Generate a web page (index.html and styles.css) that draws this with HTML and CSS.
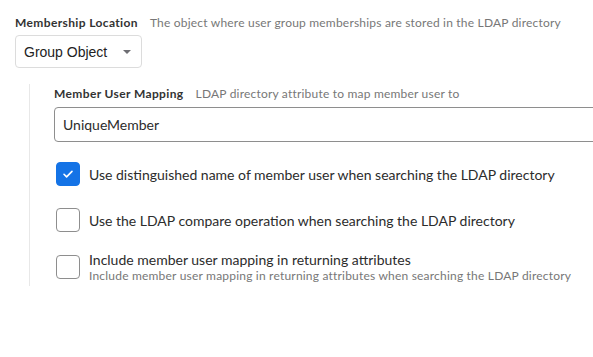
FILE: index.html
```html
<!DOCTYPE html>
<html lang="en">
<head>
  <meta charset="UTF-8">
  <meta name="viewport" content="width=device-width, initial-scale=1.0">
  <title>LDAP Group Settings</title>
  <link rel="stylesheet" href="styles.css">
</head>
<body>
  <div class="page">
    <!-- Membership location -->
    <div class="field-head">
      <span class="field-label">Membership Location</span>
      <span class="field-desc">The object where user group memberships are stored in the LDAP directory</span>
    </div>
    <div class="select">
      <span>Group Object</span>
      <span class="caret"></span>
    </div>

    <!-- Nested options -->
    <div class="nested">
      <div class="field-head">
        <span class="field-label">Member User Mapping</span>
        <span class="field-desc">LDAP directory attribute to map member user to</span>
      </div>
      <div class="text-input">UniqueMember</div>

      <div class="check-row">
        <span class="checkbox checked">
          <svg width="14" height="14" viewBox="0 0 14 14"><path d="M3 7.3l2.6 2.6L11 4.4" fill="none" stroke="#fff" stroke-width="1.6" stroke-linecap="round" stroke-linejoin="round"/></svg>
        </span>
        <div class="check-text">
          <div class="check-label">Use distinguished name of member user when searching the LDAP directory</div>
        </div>
      </div>

      <div class="check-row">
        <span class="checkbox"></span>
        <div class="check-text">
          <div class="check-label">Use the LDAP compare operation when searching the LDAP directory</div>
        </div>
      </div>

      <div class="check-row last">
        <span class="checkbox"></span>
        <div class="check-text">
          <div class="check-label">Include member user mapping in returning attributes</div>
          <div class="check-help">Include member user mapping in returning attributes when searching the LDAP directory</div>
        </div>
      </div>
    </div>
  </div>
</body>
</html>
```

FILE: styles.css
```css
body {
  margin: 0;
  font-family: "Lato", "Liberation Sans", sans-serif;
  color: #2c2c2c;
  background: #fff;
}

.page {
  padding: 15px 0 60px 15px;
  overflow: hidden;
}

.field-head {
  display: flex;
  align-items: baseline;
  gap: 12px;
  white-space: nowrap;
}

.field-label {
  font-size: 12px;
  font-weight: bold;
  letter-spacing: 0.37px;
  color: #333;
}

.field-desc {
  font-size: 12px;
  letter-spacing: 0.2px;
  color: #777;
}

.select {
  display: inline-flex;
  align-items: center;
  box-sizing: border-box;
  height: 33px;
  margin-top: 5px;
  padding: 0 10px 0 8px;
  border: 1px solid #dcdcdc;
  border-radius: 4px;
  font-family: "Liberation Sans", sans-serif;
  font-size: 14px;
  color: #222;
}

.caret {
  margin-left: 16px;
  width: 0;
  height: 0;
  border-left: 4px solid transparent;
  border-right: 4px solid transparent;
  border-top: 4px solid #6e6e73;
}

.nested {
  margin: 16px 0 0 14px;
  padding: 2px 0 4px 24px;
  border-left: 1px solid #e8e8e8;
}

.text-input {
  box-sizing: border-box;
  height: 35px;
  margin-top: 6px;
  margin-right: -10px;
  padding: 0 8px;
  display: flex;
  align-items: center;
  border: 1px solid #8e8e8e;
  border-radius: 4px;
  font-size: 14px;
  color: #2c2c2c;
}

.check-row {
  display: flex;
  align-items: center;
  gap: 9px;
  margin: 20px 0 0 2px;
  min-height: 24px;
}

.check-row + .check-row {
  margin-top: 22px;
}

.check-row.last {
  align-items: flex-start;
  margin-top: 23px;
}

.checkbox {
  flex: none;
  box-sizing: border-box;
  width: 24px;
  height: 24px;
  border: 1.5px solid #8e8e8e;
  border-radius: 4px;
  display: flex;
  align-items: center;
  justify-content: center;
}

.checkbox.checked {
  background: #1473e6;
  border-color: #1473e6;
}

.check-label {
  font-size: 14px;
  line-height: 17px;
  white-space: nowrap;
}

.last .check-label {
  line-height: 15px;
  margin-top: -3px;
}

.check-help {
  margin-top: 2px;
  font-size: 12px;
  line-height: 13px;
  letter-spacing: 0.2px;
  color: #777;
  white-space: nowrap;
}
```
